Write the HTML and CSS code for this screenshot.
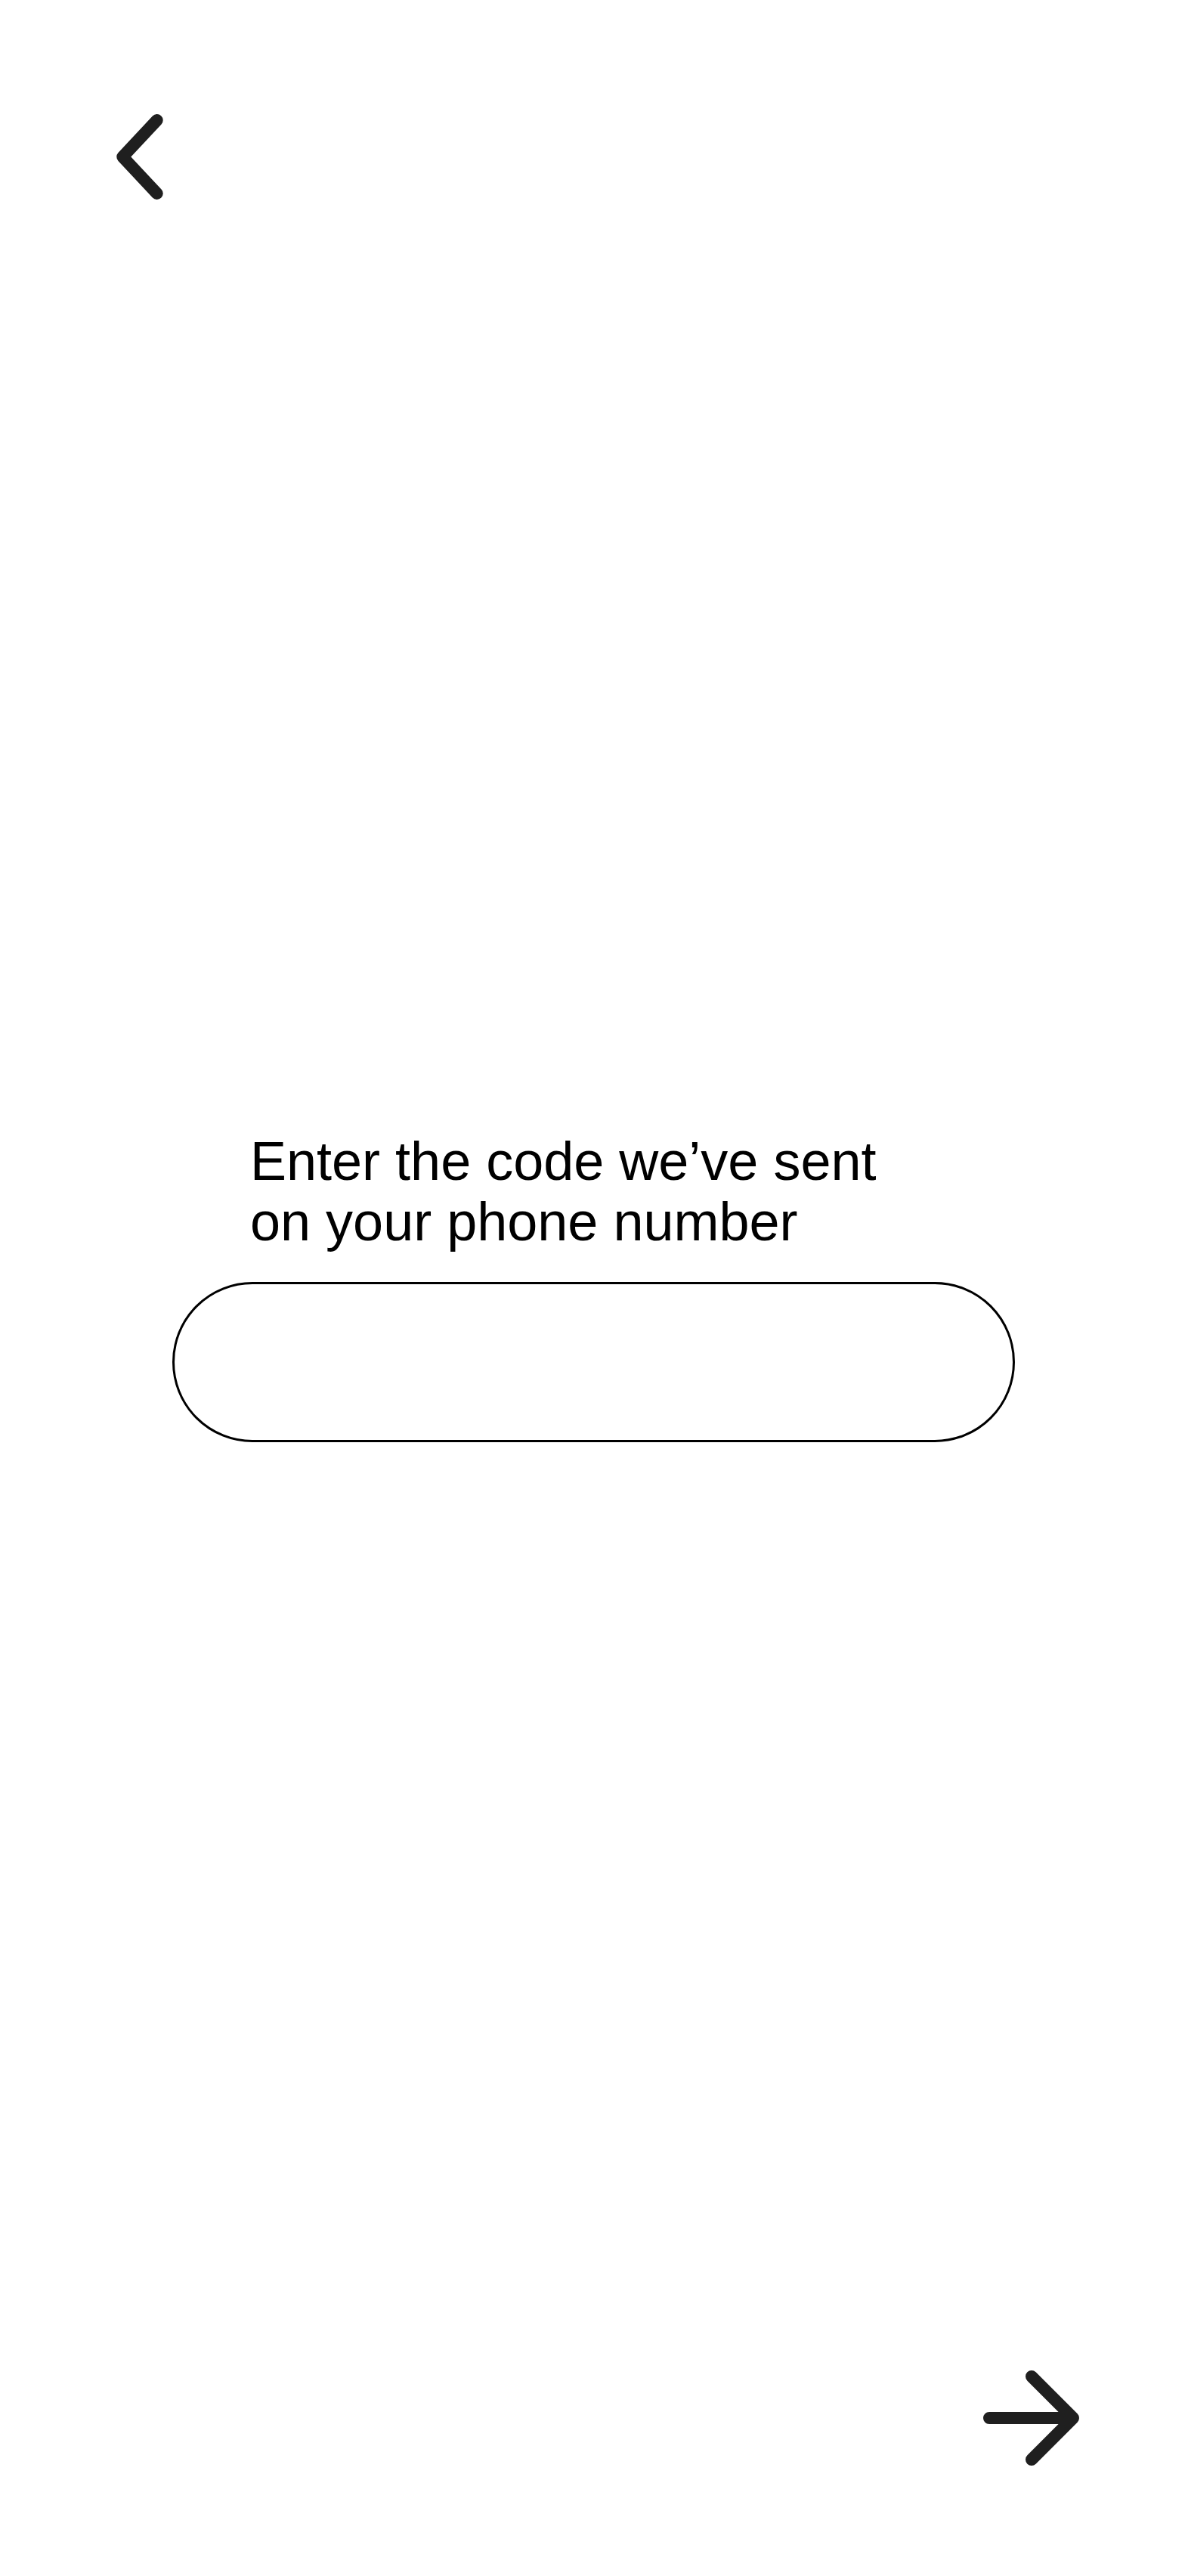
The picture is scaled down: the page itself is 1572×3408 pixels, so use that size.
FILE: index.html
```html
<!DOCTYPE html>
<html lang="en">
<head>
<meta charset="utf-8">
<title>Enter code</title>
<link rel="stylesheet" href="styles.css">
</head>
<body>
<div class="screen">
  <header class="topbar">
    <button class="icon-btn back" aria-label="Back">
      <svg width="80" height="125" viewBox="0 0 80 125" fill="none">
        <path d="M62.7 14 L17.3 62.5 L62.7 111" stroke="#1f1f1f" stroke-width="16" stroke-linecap="round" stroke-linejoin="round"/>
      </svg>
    </button>
  </header>
  <main class="content">
    <p class="prompt">Enter the code we’ve sent<br>on your phone number</p>
    <input class="code-field" type="text" aria-label="Code">
  </main>
  <footer class="bottombar">
    <button class="icon-btn next" aria-label="Next">
      <svg width="150" height="150" viewBox="0 0 150 150" fill="none">
        <path d="M19 74 L130 74 M75 19 L130 74 L75 129" stroke="#1f1f1f" stroke-width="16" stroke-linecap="round" stroke-linejoin="round"/>
      </svg>
    </button>
  </footer>
</div>
</body>
</html>
```

FILE: styles.css
```css
html, body {
  margin: 0;
  padding: 0;
  background: #ffffff;
}

body {
  font-family: "Liberation Sans", Arial, sans-serif;
  color: #000000;
}

.screen {
  display: flex;
  flex-direction: column;
  min-height: 3408px;
}

.icon-btn {
  display: block;
  border: 0;
  padding: 0;
  margin: 0;
  background: transparent;
  cursor: pointer;
}

.icon-btn svg {
  display: block;
}

.topbar {
  padding: 145px 0 0 145px;
}

.content {
  padding: 1226px 0 0 228px;
}

.prompt {
  margin: 0;
  padding-left: 103px;
  font-size: 72px;
  line-height: 80px;
  font-weight: 400;
}

.code-field {
  display: block;
  box-sizing: border-box;
  width: 1115px;
  height: 212px;
  margin: 40px 0 0 0;
  padding: 0 106px;
  border: 3px solid #000000;
  border-radius: 106px;
  background: #ffffff;
  font-family: "Liberation Sans", Arial, sans-serif;
  font-size: 72px;
  outline: none;
}

.bottombar {
  margin-top: auto;
  padding: 0 0 133px 1290px;
}
```
